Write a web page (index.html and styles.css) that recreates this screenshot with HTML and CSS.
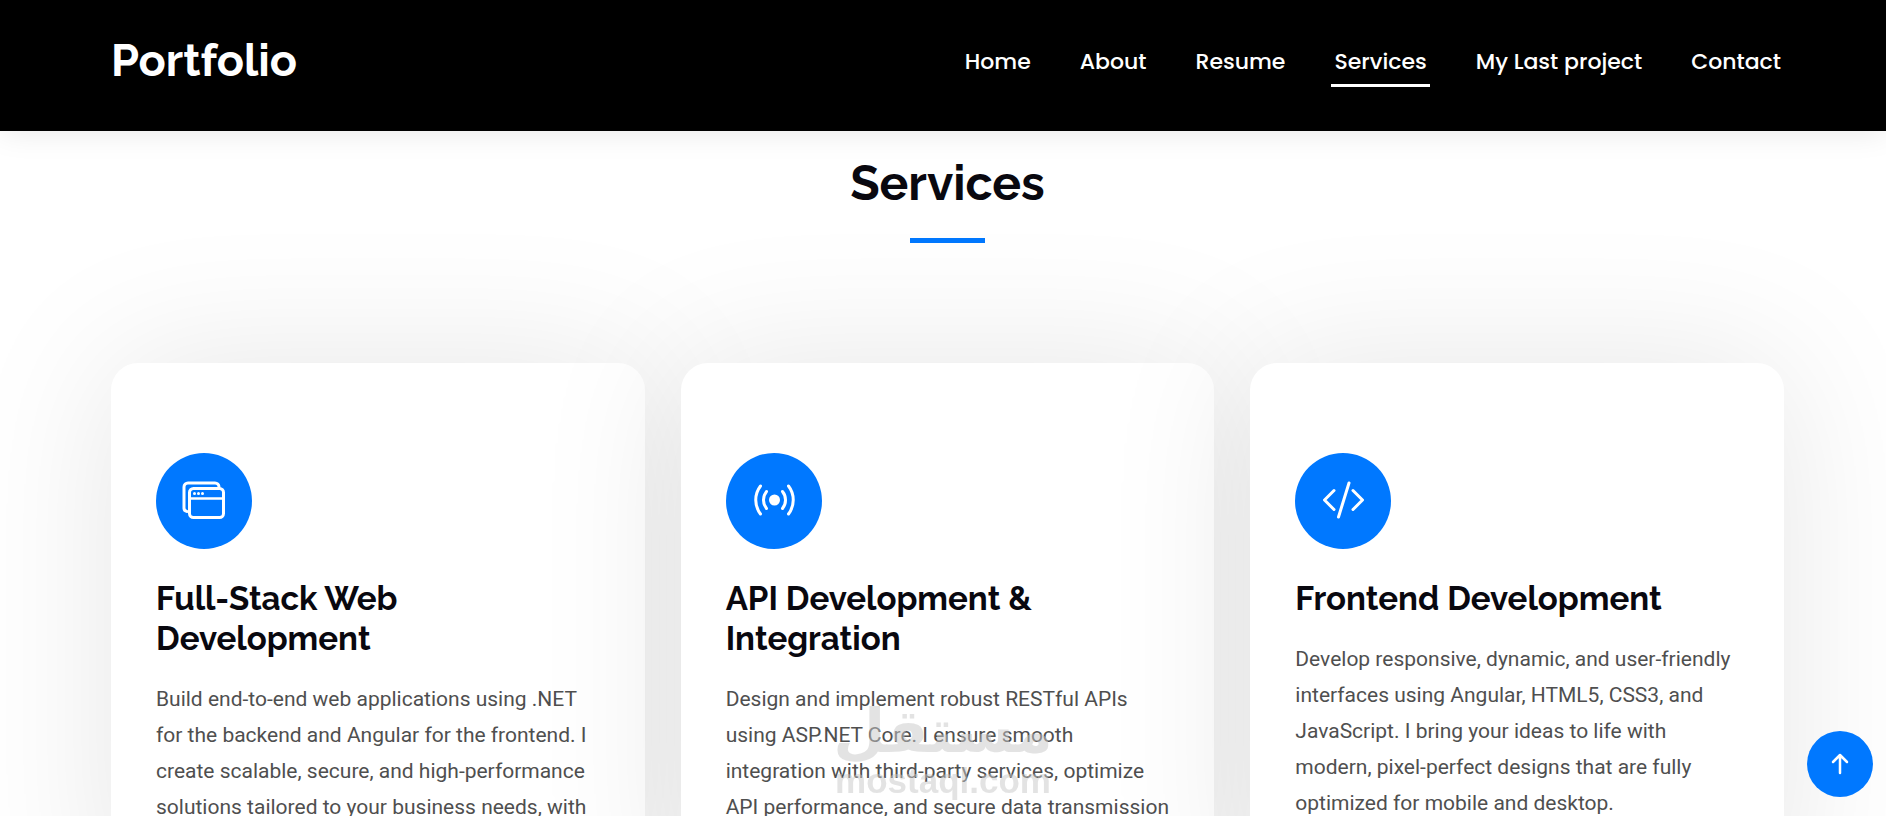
FILE: index.html
```html
<!DOCTYPE html>
<html lang="en">

<head>
    <meta charset="UTF-8">
    <meta name="viewport" content="width=device-width, initial-scale=1.0">
    <title>Portfolio</title>
    <link rel="stylesheet" href="styles.css">
</head>

<body>

    <header class="header">
        <a class="logo" href="#">Portfolio</a>
        <nav class="nav">
            <a href="#home">Home</a>
            <a href="#about">About</a>
            <a href="#resume">Resume</a>
            <a href="#services" class="active">Services</a>
            <a href="#project">My Last project</a>
            <a href="#contact">Contact</a>
        </nav>
    </header>

    <main id="services" class="services">
        <h2 class="section-title">Services</h2>

        <div class="cards">
            <article class="card">
                <div class="icon">
                    <svg viewBox="0 0 96 96" fill="none" stroke="#fff" stroke-width="3" stroke-linecap="round" stroke-linejoin="round">
                        <path d="M31 58.500a3.500 3.500 0 0 1-3-3.500V34a4 4 0 0 1 4-4h27a4 4 0 0 1 4 4" />
                        <rect x="33.500" y="35.500" width="34" height="29" rx="4" />
                        <path d="M34 45.500h33" stroke-width="2.500" />
                        <g fill="#fff" stroke="none">
                            <circle cx="38.500" cy="40.500" r="1.500" />
                            <circle cx="42.500" cy="40.500" r="1.500" />
                            <circle cx="46.500" cy="40.500" r="1.500" />
                        </g>
                    </svg>
                </div>
                <h3>Full-Stack Web Development</h3>
                <p>Build end-to-end web applications using .NET for the backend and Angular for the frontend. I create scalable, secure, and high-performance solutions tailored to your business needs, with</p>
            </article>

            <article class="card">
                <div class="icon">
                    <svg viewBox="0 0 96 96" fill="none" stroke="#fff" stroke-width="3" stroke-linecap="round">
                        <circle cx="48.500" cy="47" r="5.500" fill="#fff" stroke="none" />
                        <path d="M40.500 38.500a13.500 13.500 0 0 0 0 17M56.500 38.500a13.500 13.500 0 0 1 0 17" />
                        <path d="M34.500 33a23 23 0 0 0 0 28M62.500 33a23 23 0 0 1 0 28" />
                    </svg>
                </div>
                <h3>API Development &amp; Integration</h3>
                <p>Design and implement robust RESTful APIs using ASP.NET Core. I ensure smooth integration with third-party services, optimize API performance, and secure data transmission</p>
            </article>

            <article class="card">
                <div class="icon">
                    <svg viewBox="0 0 96 96" fill="none" stroke="#fff" stroke-width="3" stroke-linecap="round" stroke-linejoin="round">
                        <path d="M39 37.500L29.500 47l9.500 9.500M58 37.500l9.500 9.500-9.500 9.500M54 30L43.500 64" />
                    </svg>
                </div>
                <h3>Frontend Development</h3>
                <p>Develop responsive, dynamic, and user-friendly interfaces using Angular, HTML5, CSS3, and JavaScript. I bring your ideas to life with modern, pixel-perfect designs that are fully optimized for mobile and desktop.</p>
            </article>
        </div>
    </main>

    <div class="watermark">
        <span class="watermark-ar" lang="ar" dir="rtl">مستقل</span>
        <span class="watermark-en">mostaql.com</span>
    </div>

    <a class="back-to-top" href="#" aria-label="Back to top">
        <svg viewBox="0 0 24 24" fill="none" stroke="#fff" stroke-width="2.500" stroke-linecap="round" stroke-linejoin="round">
            <path d="M12 21V3M5 10l7-7 7 7" />
        </svg>
    </a>

</body>

</html>
```
FILE: styles.css
```css
* {
    box-sizing: border-box;
}

body {
    height: 100vh;
    margin: 0;
    overflow: hidden;
    background-color: #fff;
    color: #4f4f4f;
    font-family: Roboto, sans-serif;
}

.header {
    position: relative;
    z-index: 2;
    display: flex;
    align-items: flex-start;
    justify-content: space-between;
    height: 131px;
    padding: 31px 102px 0 111px;
    background-color: #000;
    box-shadow: 0 0 30px rgba(0, 0, 0, 0.1);
}

.logo {
    color: #fff;
    font-family: Raleway, sans-serif;
    font-size: 45px;
    font-weight: 700;
    line-height: 60px;
    text-decoration: none;
}

.nav {
    display: flex;
    gap: 43px;
}

.nav a {
    padding: 14px 3px 5px;
    border-bottom: 3px solid transparent;
    color: #fff;
    font-family: Poppins, sans-serif;
    font-size: 22px;
    font-weight: 500;
    line-height: 34px;
    text-decoration: none;
}

.nav a.active {
    border-bottom-color: #fff;
}

.services {
    padding: 22px 102px 90px 111px;
}

.section-title {
    display: flex;
    flex-direction: column;
    align-items: center;
    gap: 25px;
    margin: 0 0 120px;
    color: #09080f;
    font-family: Raleway, sans-serif;
    font-size: 48px;
    font-weight: 700;
    line-height: 60px;
}

.section-title::after {
    content: "";
    width: 75px;
    height: 5px;
    background-color: #0078ff;
}

.cards {
    display: grid;
    grid-template-columns: repeat(3, 1fr);
    gap: 36px;
}

.card {
    position: relative;
    padding: 90px 45px;
    border-radius: 27px;
    background-color: #fff;
    box-shadow: 0 0 150px rgba(0, 0, 0, 0.1);
}

.icon {
    width: 96px;
    height: 96px;
    border-radius: 50%;
    background-color: #0078ff;
}

.icon svg {
    display: block;
}

.card h3 {
    margin: 30px 0 22px;
    color: #09080f;
    font-family: Raleway, sans-serif;
    font-size: 33px;
    font-weight: 700;
    line-height: 40px;
}

.card p {
    margin: 0;
    font-size: 21px;
    line-height: 36px;
}

.watermark {
    position: fixed;
    bottom: 15px;
    left: 50%;
    display: flex;
    flex-direction: column;
    align-items: center;
    color: #c8c8c8;
    opacity: 0.5;
    transform: translateX(-50%);
}

.watermark-ar {
    font-family: "DejaVu Sans", sans-serif;
    font-size: 60px;
    font-weight: 700;
    line-height: 60px;
}

.watermark-en {
    font-family: "Liberation Sans", sans-serif;
    font-size: 35px;
    font-weight: 700;
    line-height: 40px;
}

.back-to-top {
    position: fixed;
    right: 13px;
    bottom: 19px;
    display: flex;
    align-items: center;
    justify-content: center;
    width: 66px;
    height: 66px;
    border-radius: 50%;
    background-color: #0078ff;
}

.back-to-top svg {
    width: 24px;
}
```
